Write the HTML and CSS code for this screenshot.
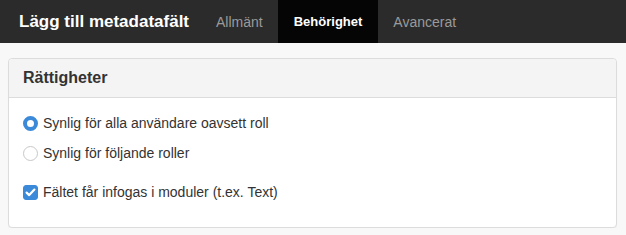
FILE: index.html
```html
<!DOCTYPE html>
<html lang="sv">
<head>
  <meta charset="UTF-8">
  <meta name="viewport" content="width=device-width, initial-scale=1.0">
  <title>Lägg till metadatafält</title>
  <link rel="stylesheet" href="styles.css">
</head>
<body>
  <div class="topbar">
    <h1 class="title">Lägg till metadatafält</h1>
    <nav class="tabs">
      <a href="#" class="tab">Allmänt</a>
      <a href="#" class="tab active">Behörighet</a>
      <a href="#" class="tab">Avancerat</a>
    </nav>
  </div>

  <div class="content">
    <div class="panel">
      <div class="panel-heading">Rättigheter</div>
      <div class="panel-body">
        <label class="option">
          <input type="radio" name="visibility" checked>
          <span>Synlig för alla användare oavsett roll</span>
        </label>
        <label class="option">
          <input type="radio" name="visibility">
          <span>Synlig för följande roller</span>
        </label>
        <label class="option option-check">
          <input type="checkbox" checked>
          <span>Fältet får infogas i moduler (t.ex. Text)</span>
        </label>
      </div>
    </div>
  </div>
</body>
</html>
```

FILE: styles.css
```css
body {
  margin: 0;
  background-color: #f8f8f8;
  font-family: "Liberation Sans", Helvetica, Arial, sans-serif;
  color: #333;
}

.topbar {
  display: flex;
  height: 43px;
  background-color: #2b2b2b;
}
.title {
  display: flex;
  align-items: center;
  margin: 0;
  padding: 0 12px 0 19px;
  font-size: 17px;
  font-weight: bold;
  color: #fff;
}
.tabs {
  display: flex;
}
.tab {
  display: flex;
  align-items: center;
  padding: 0 15px;
  font-size: 14px;
  color: #9a9a9a;
  text-decoration: none;
}
.tab.active {
  padding: 0 16px;
  background-color: #050505;
  color: #fff;
  font-size: 13px;
  font-weight: bold;
}

.content {
  padding: 15px 9px 0 8px;
}
.panel {
  background-color: #fff;
  border: 1px solid #dcdcdc;
  border-radius: 4px;
  box-shadow: 0 1px 1px rgba(0, 0, 0, 0.04);
}
.panel-heading {
  height: 38px;
  line-height: 38px;
  padding-left: 14px;
  background-color: #f4f4f4;
  border-bottom: 1px solid #dcdcdc;
  border-radius: 4px 4px 0 0;
  font-size: 16px;
  font-weight: bold;
  color: #333;
}
.panel-body {
  display: flex;
  flex-direction: column;
  gap: 10px;
  padding: 15px 14px 25px;
}
.option {
  display: flex;
  align-items: center;
  height: 20px;
  font-size: 14px;
  color: #333;
}
.option-check {
  margin-top: 9px;
}
.option input {
  appearance: none;
  -webkit-appearance: none;
  box-sizing: border-box;
  width: 15px;
  height: 15px;
  margin: 0 5px 0 0;
  border: 1px solid #c8c8c8;
  background-color: #fff;
}
.option input[type="radio"] {
  border-radius: 50%;
}
.option input[type="radio"]:checked {
  border: 4.5px solid #3b8ad9;
  background-color: #fff;
}
.option input[type="checkbox"] {
  border-radius: 3px;
}
.option input[type="checkbox"]:checked {
  border-color: #3b8ad9;
  background-color: #3b8ad9;
  background-image: url("data:image/svg+xml;utf8,<svg xmlns='http://www.w3.org/2000/svg' viewBox='0 0 15 15'><path d='M3.6 7.6 L6.2 10.1 L11.4 4.6' fill='none' stroke='white' stroke-width='2.2' stroke-linecap='round' stroke-linejoin='round'/></svg>");
  background-position: center;
  background-repeat: no-repeat;
  background-size: 15px 15px;
}
```
